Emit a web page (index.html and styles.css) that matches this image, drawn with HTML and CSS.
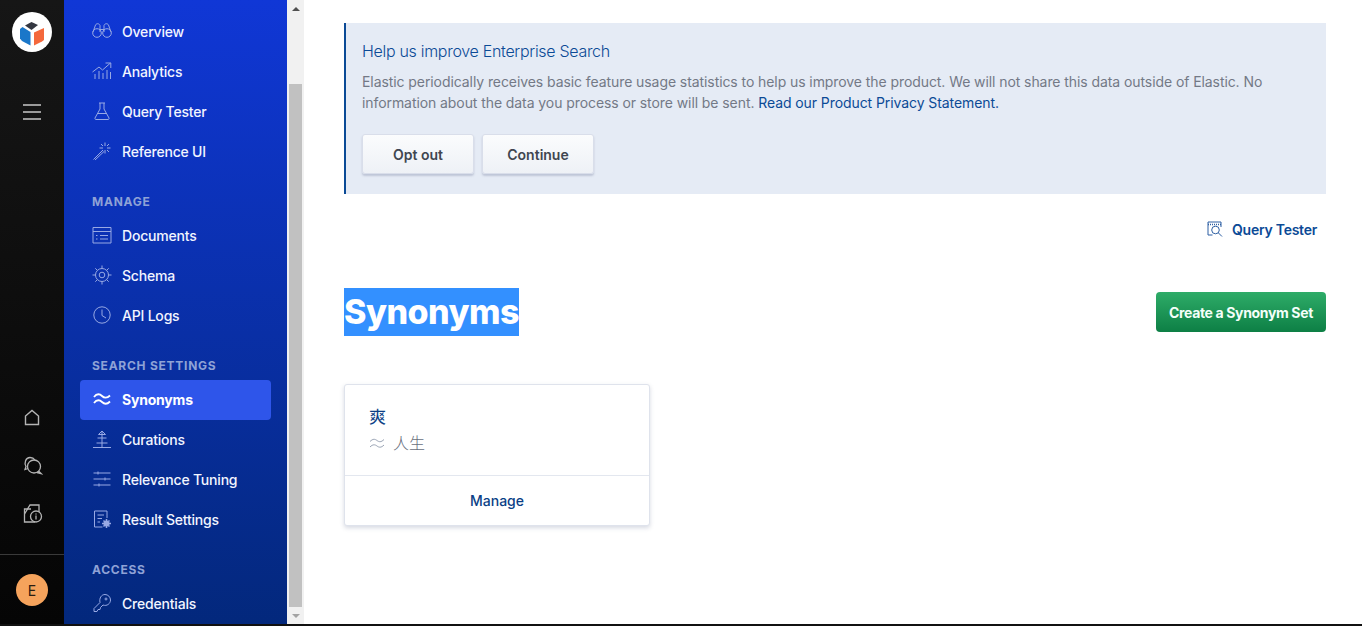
FILE: index.html
```html
<!DOCTYPE html>
<html lang="en">
<head>
  <meta charset="UTF-8">
  <meta name="viewport" content="width=device-width, initial-scale=1.0">
  <title>Synonyms</title>
  <link rel="stylesheet" href="styles.css">
</head>
<body>
  <div class="app">
    <!-- Dark rail -->
    <div class="rail">
      <div class="logo">
        <svg width="40" height="40" viewBox="0 0 40 40">
          <circle cx="20" cy="20" r="20" fill="#fff"/>
          <path d="M13 13.500 19.500 10 26 13 19.500 18Z" fill="#343741"/>
          <path d="M8 17 10.500 15 18.500 20V33.500L10 29 8 26.500Z" fill="#1a77c9"/>
          <path d="M22 20.500 32 16V28L30 29.500 22 33.500Z" fill="#f4683c"/>
        </svg>
      </div>
      <div class="menu-btn">
        <svg width="20" height="18" viewBox="0 0 20 18" fill="none" stroke="#c8c8c8" stroke-width="1.6">
          <path d="M1 2H19M1 9H19M1 16H19"/>
        </svg>
      </div>
      <div class="rail-icons">
        <svg width="20" height="20" viewBox="0 0 20 20" fill="none" stroke="#b4b4b4" stroke-width="1.4">
          <path d="M3.500 8 10 2.500 16.500 8V16.500H3.500Z"/>
        </svg>
        <svg width="22" height="22" viewBox="0 0 22 22" fill="none" stroke="#b4b4b4" stroke-width="1.300">
          <path d="M7 14.500 4 15.500 5 12.500C3 9 4.500 3.500 9 3.500 11.500 3.500 13 4.500 14 6"/>
          <circle cx="13" cy="12.500" r="6.500"/>
          <path d="M17.500 17 20 19.500 16 18.500"/>
        </svg>
        <svg width="22" height="22" viewBox="0 0 22 22" fill="none" stroke="#b4b4b4" stroke-width="1.300">
          <path d="M10 7H3.500V20H14"/>
          <path d="M3.500 12 9 3H18V10"/>
          <circle cx="15" cy="14.500" r="5.500"/>
          <path d="M15 13.500V17.500M15 11.500V12.500"/>
        </svg>
      </div>
      <div class="rail-user">
        <div class="avatar">E</div>
      </div>
    </div>

    <!-- Blue nav -->
    <nav class="sidebar">
      <div class="nav-item">
        <svg class="nav-icon" viewBox="0 0 20 20"><circle cx="5" cy="12" r="4.300"/><circle cx="15" cy="12" r="4.300"/><path d="M1 11 3.500 4C4.500 2 7.500 2.500 8 4.500V11M19 11 16.500 4C15.500 2 12.500 2.500 12 4.500V11M8 8.500H12"/></svg>
        Overview
      </div>
      <div class="nav-item">
        <svg class="nav-icon" viewBox="0 0 20 20"><path d="M0.500 11 7 6 10.500 9 18.500 2M13.500 2H18.800V7M3 18V13M7 18V10M11 18V12M15 18V9M18.500 18V11"/></svg>
        Analytics
      </div>
      <div class="nav-item">
        <svg class="nav-icon" viewBox="0 0 20 20"><path d="M7 2H13M8 2V8L3 17C2.800 18 3.200 18.500 4 18.500H16C16.800 18.500 17.200 18 17 17L12 8V2M6 12.500H14"/></svg>
        Query Tester
      </div>
      <div class="nav-item">
        <svg class="nav-icon" viewBox="0 0 20 20"><path d="M1.500 18.500 11 9M3 19 12 10.500M13 1.500V5M13 9V12.500M7.500 7H11M15 7H18.500M9 3 11 5M15 9 17 11M17 3 15 5"/></svg>
        Reference UI
      </div>

      <div class="nav-label">MANAGE</div>
      <div class="nav-item">
        <svg class="nav-icon" viewBox="0 0 20 20"><path d="M1 2.500H19V18H1ZM1 6.500H19M4 10.500H5.500M8 10.500H16M4 14H5.500M8 14H16"/></svg>
        Documents
      </div>
      <div class="nav-item">
        <svg class="nav-icon" viewBox="0 0 20 20"><circle cx="10" cy="10" r="2.800"/><circle cx="10" cy="10" r="6.500"/><path d="M10 0.500V3.500M10 16.500V19.500M0.500 10H3.500M16.500 10H19.500M3.300 3.300 5.400 5.400M14.600 14.600 16.700 16.700M3.300 16.700 5.400 14.600M14.600 5.400 16.700 3.300"/></svg>
        Schema
      </div>
      <div class="nav-item">
        <svg class="nav-icon" viewBox="0 0 20 20"><circle cx="10" cy="10" r="8.200"/><path d="M10 4.500V10.500L14 13"/></svg>
        API Logs
      </div>

      <div class="nav-label">SEARCH SETTINGS</div>
      <div class="nav-item nav-item-active">
        <svg class="nav-icon" viewBox="0 0 20 20"><path d="M2 8C5 4 8 5 10 7 12 9 15 9.500 18 6.500M2 14C5 10 8 11 10 13 12 15 15 15.500 18 12.500"/></svg>
        Synonyms
      </div>
      <div class="nav-item">
        <svg class="nav-icon" viewBox="0 0 20 20"><path d="M1 18.500H19M10 2V18.500M10 2 6.500 5.500H13.500ZM5.500 9H14.500M4.500 14H15.500"/></svg>
        Curations
      </div>
      <div class="nav-item">
        <svg class="nav-icon" viewBox="0 0 20 20"><path d="M1.500 4H18.500M1.500 10H18.500M1.500 16H18.500M6 2.500V5.500M13 8.500V11.500M7 14.500V17.500"/></svg>
        Relevance Tuning
      </div>
      <div class="nav-item">
        <svg class="nav-icon" viewBox="0 0 20 20"><path d="M10.500 18H2.500V2H15V9M5.500 6H12M5.500 9.500H10M5.500 13H8"/><circle class="nav-icon-fill" cx="14.500" cy="14.500" r="3"/><path class="nav-icon-teeth" d="M14.500 10V19M10 14.500H19M11.500 11.500 17.500 17.500M11.500 17.500 17.500 11.500"/></svg>
        Result Settings
      </div>

      <div class="nav-label">ACCESS</div>
      <div class="nav-item">
        <svg class="nav-icon" viewBox="0 0 20 20"><path d="M8 9.500 2 15.500V18.500H5L6 16.500H8L8.500 14.500 11 12C15 13.500 18.500 10.500 18.500 7 18.500 4 16 1.500 13 1.500 9.500 1.500 7 5 8 9.500Z"/><circle cx="14" cy="6" r="1"/></svg>
        Credentials
      </div>
    </nav>

    <!-- Page scrollbar -->
    <div class="scrollbar">
      <div class="scroll-arrow"><span class="arrow-up"></span></div>
      <div class="scroll-gap"></div>
      <div class="scroll-thumb"></div>
      <div class="scroll-arrow"><span class="arrow-down"></span></div>
    </div>

    <main class="content">
      <section class="notice">
        <h3 class="notice-title">Help us improve Enterprise Search</h3>
        <p class="notice-text">Elastic periodically receives basic feature usage statistics to help us improve the product. We will not share this data outside of Elastic. No information about the data you process or store will be sent. <a class="notice-link" href="#">Read our Product Privacy Statement.</a></p>
        <div class="notice-actions">
          <button class="btn-plain" type="button">Opt out</button>
          <button class="btn-plain" type="button">Continue</button>
        </div>
      </section>

      <div class="query-row">
        <a class="query-link" href="#">
          <svg width="16" height="16" viewBox="0 0 16 16" fill="none" stroke="#2d5fa3" stroke-width="1">
            <path d="M5.500 14H1V1H14V6"/>
            <path d="M1 3.500H14" stroke-dasharray="1 1" stroke-width="1.600"/>
            <circle cx="8.500" cy="9" r="3.800"/>
            <path d="M11.300 11.800 15 15.500"/>
          </svg>
          Query Tester
        </a>
      </div>

      <div class="page-head">
        <h1 class="page-title"><span class="page-title-sel">Synonyms</span></h1>
        <button class="btn-create" type="button">Create a Synonym Set</button>
      </div>

      <div class="card">
        <div class="card-body">
          <div class="card-title">爽</div>
          <div class="card-sub">
            <svg width="16" height="16" viewBox="0 0 16 16" fill="none" stroke="#98a2b3" stroke-width="1">
              <path d="M1 6.500C4 3.500 6 4 8 5.500 10 7 12 7.500 15 4.500M1 12C4 9 6 9.500 8 11 10 12.500 12 13 15 10"/>
            </svg>
            <span>人生</span>
          </div>
        </div>
        <div class="card-foot">Manage</div>
      </div>
    </main>
  </div>
  <div class="bottom-edge"></div>
</body>
</html>
```

FILE: styles.css
```css
html, body {
  margin: 0;
  padding: 0;
  height: 626px;
  overflow: hidden;
}
body {
  font-family: Inter, "Noto Sans CJK SC", sans-serif;
  background: #fff;
  color: #343741;
}
.app {
  display: flex;
  height: 624px;
  overflow: hidden;
}
.bottom-edge {
  height: 2px;
  background: #111;
}

/* Rail */
.rail {
  width: 64px;
  flex-shrink: 0;
  display: flex;
  flex-direction: column;
  align-items: center;
  background: linear-gradient(to bottom, #161616, #050505);
}
.logo {
  height: 40px;
  margin-top: 12px;
}
.menu-btn {
  margin-top: 51px;
  height: 18px;
}
.rail-icons {
  margin-top: auto;
  display: flex;
  flex-direction: column;
  align-items: center;
  gap: 26px;
  height: 146px;
}
.rail-user {
  align-self: stretch;
  height: 70px;
  border-top: 1px solid #3a3a3a;
  display: flex;
  justify-content: center;
  padding-top: 19px;
  box-sizing: border-box;
}
.avatar {
  width: 32px;
  height: 32px;
  border-radius: 50%;
  background: #f5a35c;
  color: #2a1c10;
  font-size: 14px;
  font-weight: 400;
  display: flex;
  align-items: center;
  justify-content: center;
}

/* Sidebar */
.sidebar {
  width: 223px;
  flex-shrink: 0;
  box-sizing: border-box;
  padding: 12px 16px 0;
  background: linear-gradient(to bottom, #1037d6, #03287c);
}
.nav-item {
  display: flex;
  align-items: center;
  gap: 10px;
  height: 40px;
  box-sizing: border-box;
  padding: 0 0 2px 12px;
  border-radius: 4px;
  color: #f2f5ff;
  font-size: 14px;
  font-weight: 500;
  letter-spacing: -0.2px;
}
.nav-item-active {
  background: #2e55ea;
  color: #fff;
  font-weight: 700;
}
.nav-icon {
  width: 20px;
  height: 20px;
  flex-shrink: 0;
  fill: none;
  stroke: #98a9e4;
  stroke-width: 1;
}
.nav-item-active .nav-icon {
  stroke: #fff;
  stroke-width: 1.8;
}
.nav-icon .nav-icon-fill {
  fill: #98a9e4;
  stroke: none;
}
.nav-icon .nav-icon-teeth {
  stroke-width: 1.5;
  stroke-dasharray: 2 5;
}
.nav-label {
  padding: 20px 0 4px 12px;
  line-height: 20px;
  font-size: 12px;
  font-weight: 700;
  letter-spacing: 0.75px;
  color: #8fa2d6;
}

/* Scrollbar */
.scrollbar {
  width: 17px;
  flex-shrink: 0;
  display: flex;
  flex-direction: column;
  background: #f1f1f1;
}
.scroll-arrow {
  height: 17px;
  display: flex;
  align-items: center;
  justify-content: center;
}
.scroll-gap {
  height: 67px;
}
.scroll-thumb {
  flex: 1;
  margin: 0 2px;
  background: #c1c1c1;
}
.arrow-up {
  border: 4px solid transparent;
  border-top: 0;
  border-bottom: 4px solid #505050;
}
.arrow-down {
  border: 4px solid transparent;
  border-bottom: 0;
  border-top: 4px solid #a3a3a3;
}

/* Main */
.content {
  flex: 1;
  min-width: 0;
  padding: 23px 36px 0 40px;
}
.notice {
  height: 171px;
  box-sizing: border-box;
  padding: 17px 16px 0 16px;
  background: #e5ebf5;
  border-left: 2px solid #0b4a96;
}
.notice-title {
  margin: 0;
  font-size: 16px;
  line-height: 22px;
  font-weight: 300;
  letter-spacing: -0.3px;
  color: #0b4a96;
}
.notice-text {
  margin: 9px 0 0;
  font-size: 14px;
  line-height: 21px;
  letter-spacing: -0.08px;
  color: #737986;
}
.notice-link {
  color: #0b4a96;
  text-decoration: none;
}
.notice-actions {
  display: flex;
  gap: 8px;
  margin-top: 21px;
}
.btn-plain {
  width: 112px;
  height: 40px;
  border: 1px solid #d9deea;
  border-radius: 3px;
  background: linear-gradient(to bottom, #fbfcfd, #eef1f6);
  box-shadow: 0 2px 2px rgba(120, 130, 160, 0.35);
  color: #404650;
  font-family: inherit;
  font-size: 14px;
  font-weight: 600;
}
.query-row {
  display: flex;
  justify-content: flex-end;
  padding: 25px 9px 0 0;
}
.query-link {
  display: flex;
  align-items: center;
  gap: 9px;
  height: 20px;
  color: #0b4a96;
  font-size: 14px;
  font-weight: 600;
  letter-spacing: -0.25px;
  text-decoration: none;
}
.page-head {
  display: flex;
  justify-content: space-between;
  align-items: center;
  height: 48px;
  margin-top: 49px;
}
.page-title {
  margin: 0;
  font-size: 34px;
  line-height: 48px;
  font-weight: 800;
  letter-spacing: -0.5px;
}
.page-title-sel {
  display: block;
  height: 48px;
  background: #3390ff;
  color: #fff;
}
.btn-create {
  width: 170px;
  height: 40px;
  border: 0;
  border-radius: 4px;
  background: linear-gradient(to bottom, #2eac68, #0d7f45);
  color: #f4fff9;
  font-family: inherit;
  font-size: 14px;
  font-weight: 700;
  letter-spacing: -0.35px;
}
.card {
  width: 306px;
  height: 142px;
  box-sizing: border-box;
  margin-top: 48px;
  border: 1px solid #dfe3ec;
  border-radius: 3px;
  background: #fff;
  box-shadow: 0 2px 4px rgba(120, 130, 160, 0.3);
}
.card-body {
  height: 91px;
  box-sizing: border-box;
  padding: 20px 24px 0;
  border-bottom: 1px solid #e3e7ef;
}
.card-title {
  font-size: 17px;
  line-height: 24px;
  color: #0b3f86;
}
.card-sub {
  display: flex;
  align-items: center;
  gap: 8px;
  margin-top: 2px;
  font-size: 16px;
  line-height: 24px;
  font-weight: 300;
  color: #69707d;
}
.card-foot {
  text-align: center;
  padding-top: 15px;
  font-size: 14px;
  line-height: 20px;
  font-weight: 500;
  color: #0b3f86;
}
```
